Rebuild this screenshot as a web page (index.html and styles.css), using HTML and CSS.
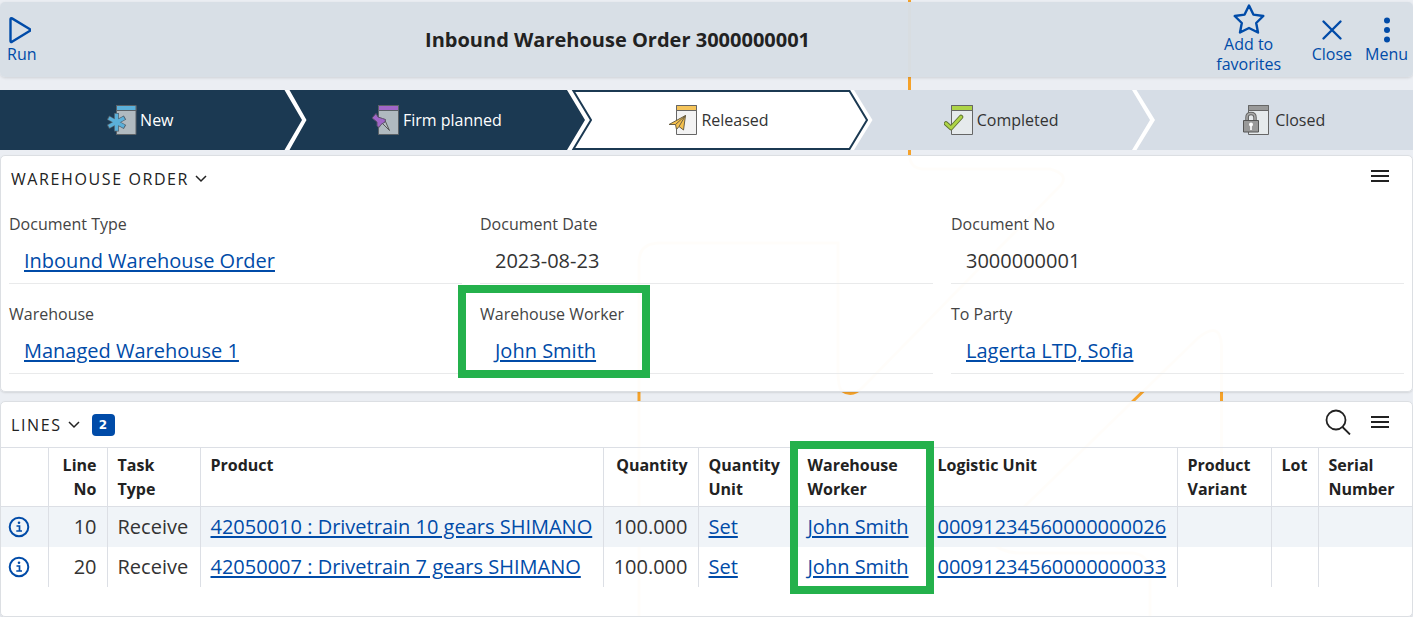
FILE: index.html
```html
<!DOCTYPE html>
<html lang="en">
<head>
<meta charset="utf-8">
<title>Inbound Warehouse Order 3000000001</title>
<link rel="stylesheet" href="styles.css">
</head>
<body>
<svg class="backdrop" width="1413" height="617" fill="none" stroke="#f5a22a" stroke-width="3" aria-hidden="true">
  <path d="M909.500 0V155Q910 169 924 169H1050Q1072 175 1058 188L863 387Q852 398 841 390Q838 386 838 370V243H660Q639 243 639 262V617"/>
  <path d="M1221.500 480V345Q1220 320 1198 338L990 540Q1000 553 1020 553H1130Q1150 553 1150 575V617"/>
</svg>
<div class="page">
  <header class="topbar">
    <button class="action action-start" type="button">
      <svg width="24" height="28" viewBox="0 0 24 28" fill="none" stroke="#004ba8" stroke-width="2.400" stroke-linejoin="round"><path d="M3.500 3.200Q3.500 1.600 5 2.400L23 13.200Q24.300 14 23 14.800L5 25.800Q3.500 26.500 3.500 25Z"/></svg>
      <span>Run</span>
    </button>
    <h1 class="title">Inbound Warehouse Order 3000000001</h1>
    <div class="actions">
      <button class="action action-wide" type="button">
        <svg width="32" height="30" viewBox="0 0 32 30" fill="none" stroke="#004ba8" stroke-width="2.400" stroke-linejoin="round"><path d="M16 1.500L20.400 10.600L30.300 12L23.200 19L25 28.500L16 24L7 28.500L8.800 19L1.700 12L11.600 10.600Z"/></svg>
        <span>Add to favorites</span>
      </button>
      <button class="action" type="button">
        <svg width="24" height="28" viewBox="0 0 24 28" fill="none" stroke="#004ba8" stroke-width="2.400" stroke-linecap="round"><path d="M3.500 5.500L20.500 22.500M20.500 5.500L3.500 22.500"/></svg>
        <span>Close</span>
      </button>
      <button class="action" type="button">
        <svg width="24" height="28" viewBox="0 0 24 28" fill="#004ba8"><circle cx="12" cy="4.500" r="3"/><circle cx="12" cy="14" r="3"/><circle cx="12" cy="23.500" r="3"/></svg>
        <span>Menu</span>
      </button>
    </div>
  </header>

  <nav class="steps" aria-label="Document state">
    <button class="step step-done" type="button">
      <svg width="30" height="32" viewBox="0 0 30 32"><path d="M9.500 1.500H29V30.500H9.500Z" fill="#b0bac0" stroke="#5b6166"/><path d="M9.500 1.500H29V6.500H9.500Z" fill="#5bb0da" stroke="#5b6166"/><path d="M9.500 9V27.500M1 13.500L18 23M18 13.500L1 23" stroke="#50606c" stroke-width="4.800"/><path d="M9.500 9.800V26.700M1.800 14L17.200 22.500M17.200 14L1.800 22.500" stroke="#5bb0da" stroke-width="3.400"/></svg>
      New
      <svg class="chevron" width="30" height="60" viewBox="0 0 30 60"><path d="M0 0H4L22 30L4 60H0Z" fill="#1b3952"/><path d="M1.500 0H6.500L23.500 30L6.500 60H1.500L19 30Z" fill="#fff"/></svg>
    </button>
    <button class="step step-done" type="button">
      <svg width="30" height="32" viewBox="0 0 30 32"><path d="M8.500 1.500H28.500V30.500H8.500Z" fill="#b0bac0" stroke="#5b6166"/><path d="M8.500 1.500H28.500V6.500H8.500Z" fill="#a066c8" stroke="#5b6166"/><path d="M12 19L19.500 26.500L15 16.500Z" fill="#b8c0c5" stroke="#555"/><path d="M2 14L6 9.500L8 13L12.500 14.500L15.500 15.500L15 18L11 20.500L9 23.500L7 22L7 18Z" fill="#a066c8" stroke="#5a5068"/></svg>
      Firm planned
      <svg class="chevron" width="30" height="60" viewBox="0 0 30 60"><path d="M0 0H4L22 30L4 60H0Z" fill="#1b3952"/><path d="M2 0H30V60H2L20 30Z" fill="#fff"/><path d="M30 1H8.500L26 30L8.500 59H30" fill="none" stroke="#1b3952" stroke-width="2"/></svg>
    </button>
    <button class="step step-current" type="button" aria-current="step">
      <svg width="30" height="32" viewBox="0 0 30 32"><path d="M8.500 1.500H28.500V30.500H8.500Z" fill="#f3f3f3" stroke="#666"/><path d="M8.500 1.500H28.500V6.500H8.500Z" fill="#f5c45a" stroke="#666"/><path d="M1 20.500L17.500 11.500L15.500 26L11 22.500L8.500 25.500L7.500 20.500Z" fill="#f5c04c" stroke="#6b6045"/><path d="M7.500 20.500L17.500 11.500L11 22.500" fill="none" stroke="#6b6045"/></svg>
      Released
      <svg class="chevron" width="30" height="60" viewBox="0 0 30 60"><path d="M0 0H6L24.500 30L6 60H0Z" fill="#fff"/><path d="M0 1H1.500L19 30L1.500 59H0" fill="#fff" stroke="#1b3952" stroke-width="2"/></svg>
    </button>
    <button class="step" type="button">
      <svg width="30" height="32" viewBox="0 0 30 32"><path d="M7.500 1.500H28.500V30.500H7.500Z" fill="#e6eaec" stroke="#666"/><path d="M7.500 1.500H28.500V6.500H7.500Z" fill="#aed447" stroke="#666"/><path d="M2 19.500L7 24L17 13" fill="none" stroke="#5e7131" stroke-width="4.500" stroke-linecap="round" stroke-linejoin="round"/><path d="M2 19.500L7 24L17 13" fill="none" stroke="#aed447" stroke-width="2.800" stroke-linecap="round" stroke-linejoin="round"/></svg>
      Completed
      <svg class="chevron" width="30" height="60" viewBox="0 0 30 60"><path d="M0 0H4L22 30L4 60H0Z" fill="#d6dde6"/><path d="M2 0H6.500L25 30L6.500 60H2L20 30Z" fill="#fff"/></svg>
    </button>
    <button class="step" type="button">
      <svg width="30" height="32" viewBox="0 0 30 32"><path d="M6.500 1.500H26.500V30.500H6.500Z" fill="#e6eaec" stroke="#666"/><path d="M6.500 1.500H26.500V6.500H6.500Z" fill="#999" stroke="#666"/><path d="M5 17V13.500Q5 9.500 9 9.500T13 13.500V17" fill="none" stroke="#666" stroke-width="3.500"/><path d="M5 17V13.500Q5 9.500 9 9.500T13 13.500V17" fill="none" stroke="#aaa" stroke-width="1.500"/><path d="M1.500 16.500H16.500V28H1.500Z" fill="#999" stroke="#555"/><circle cx="9" cy="20.500" r="2" fill="#fff"/><path d="M8.200 21H9.800V26H8.200Z" fill="#fff"/></svg>
      Closed
    </button>
  </nav>

  <main>
    <section class="card card-order">
      <div class="card-head">
        <h2><button class="toggle" type="button">WAREHOUSE ORDER
          <svg width="12" height="8" viewBox="0 0 12 8" fill="none" stroke="#222" stroke-width="1.500"><path d="M1 1L6 6L11 1"/></svg></button></h2>
        <button class="icon-button" type="button" aria-label="Panel menu"><svg width="18" height="14" viewBox="0 0 18 14" stroke="#222" stroke-width="2"><path d="M0 2H18M0 7H18M0 12H18"/></svg></button>
      </div>
      <dl class="fields">
        <div class="field"><dt>Document Type</dt><dd><a href="#">Inbound Warehouse Order</a></dd></div>
        <div class="field"><dt>Document Date</dt><dd>2023-08-23</dd></div>
        <div class="field"><dt>Document No</dt><dd>3000000001</dd></div>
        <div class="field"><dt>Warehouse</dt><dd><a href="#">Managed Warehouse 1</a></dd></div>
        <div class="field marked"><dt>Warehouse Worker</dt><dd><a href="#">John Smith</a></dd></div>
        <div class="field"><dt>To Party</dt><dd><a href="#">Lagerta LTD, Sofia</a></dd></div>
      </dl>
    </section>

    <section class="card card-lines">
      <div class="card-head">
        <h2><button class="toggle" type="button">LINES
          <svg width="12" height="8" viewBox="0 0 12 8" fill="none" stroke="#222" stroke-width="1.500"><path d="M1 1L6 6L11 1"/></svg></button></h2>
        <span class="badge">2</span>
        <div class="tools">
          <button class="icon-button" type="button" aria-label="Search"><svg width="26" height="26" viewBox="0 0 26 26" fill="none" stroke="#222" stroke-width="1.800"><circle cx="11" cy="11" r="9.500"/><path d="M17.500 18L25 25.500"/></svg></button>
          <button class="icon-button" type="button" aria-label="Panel menu"><svg width="18" height="14" viewBox="0 0 18 14" stroke="#222" stroke-width="2"><path d="M0 2H18M0 7H18M0 12H18"/></svg></button>
        </div>
      </div>
      <table class="lines">
        <colgroup><col class="c-info"><col class="c-no"><col class="c-task"><col class="c-product"><col class="c-qty"><col class="c-unit"><col class="c-worker"><col class="c-logistic"><col class="c-variant"><col class="c-lot"><col></colgroup>
        <thead>
          <tr><th></th><th class="num">Line No</th><th>Task Type</th><th>Product</th><th class="num">Quantity</th><th>Quantity Unit</th><th>Warehouse Worker</th><th>Logistic Unit</th><th>Product Variant</th><th>Lot</th><th>Serial Number</th></tr>
        </thead>
        <tbody>
          <tr>
            <td><button class="info" type="button" aria-label="Details"><svg width="22" height="22" viewBox="0 0 22 22" fill="none" stroke="#004ba8" stroke-width="2"><circle cx="11" cy="11" r="9.300"/><path d="M8.500 10H11.500V15M8.300 15H14" stroke-width="1.700"/><circle cx="11" cy="6.800" r="1.300" fill="#004ba8" stroke="none"/></svg></button></td>
            <td class="num">10</td><td>Receive</td><td><a href="#">42050010 : Drivetrain 10 gears SHIMANO</a></td><td class="num">100.000</td><td><a href="#">Set</a></td><td><a href="#">John Smith</a></td><td><a href="#">00091234560000000026</a></td><td></td><td></td><td></td>
          </tr>
          <tr>
            <td><button class="info" type="button" aria-label="Details"><svg width="22" height="22" viewBox="0 0 22 22" fill="none" stroke="#004ba8" stroke-width="2"><circle cx="11" cy="11" r="9.300"/><path d="M8.500 10H11.500V15M8.300 15H14" stroke-width="1.700"/><circle cx="11" cy="6.800" r="1.300" fill="#004ba8" stroke="none"/></svg></button></td>
            <td class="num">20</td><td>Receive</td><td><a href="#">42050007 : Drivetrain 7 gears SHIMANO</a></td><td class="num">100.000</td><td><a href="#">Set</a></td><td><a href="#">John Smith</a></td><td><a href="#">00091234560000000033</a></td><td></td><td></td><td></td>
          </tr>
        </tbody>
      </table>
      <div class="column-mark" aria-hidden="true"></div>
    </section>
  </main>
</div>
</body>
</html>
```
FILE: styles.css
```css
*, *::before { box-sizing: border-box; }
body {
  margin: 0;
  background: #ebeef3;
  color: #333;
  font: 16px/20px "Open Sans", "Noto Sans", sans-serif;
}
button {
  margin: 0;
  padding: 0;
  border: 0;
  background: none;
  color: inherit;
  font: inherit;
  cursor: pointer;
}
svg { display: block; flex: none; }
a { color: #004ba8; text-underline-offset: 2px; text-decoration-thickness: 2px; }
.backdrop { position: absolute; top: 0; left: 0; z-index: -1; }
.page { padding-top: 2px; }

.topbar {
  display: flex;
  align-items: center;
  min-height: 75px;
  padding: 0 5px 0 7px;
  border-radius: 5px;
  background: rgba(215, 222, 229, 0.98);
  box-shadow: 0 1px 3px rgba(0, 0, 0, 0.12);
}
.title {
  flex: 1;
  margin: 0;
  text-align: center;
  font-size: 20px;
  font-weight: 700;
  line-height: 28px;
  color: #222;
}
.actions { display: flex; align-items: center; gap: 13px; }
.action {
  display: flex;
  flex-direction: column;
  align-items: center;
  color: #004ba8;
}
.action-start { align-items: flex-start; }
.action-wide { width: 100px; padding: 0 16px 2px; }

.steps {
  display: grid;
  grid-template-columns: repeat(5, 1fr);
  margin-top: 13px;
}
.step {
  position: relative;
  display: flex;
  align-items: center;
  justify-content: center;
  gap: 3px;
  height: 60px;
  padding-left: 24px;
  background: #d6dde6;
}
.step:first-child { padding: 0 2px 0 0; }
.step-done { background: #1b3952; color: #fff; font-weight: 500; }
.step-current {
  background: #fff;
  border: solid #1b3952;
  border-width: 2px 0;
}
.chevron { position: absolute; top: 0; left: 100%; z-index: 1; }
.step-current .chevron { top: -2px; }

.card {
  position: relative;
  border: 1px solid #dcdfe3;
  border-radius: 5px;
  background: rgba(255, 255, 255, 0.98);
  box-shadow: 0 1px 2px rgba(0, 0, 0, 0.1);
}
.card-order { margin-top: 5px; padding-bottom: 17px; }
.card-lines { margin-top: 9px; padding-bottom: 29px; }
.card-head {
  display: flex;
  align-items: center;
  height: 45px;
  padding: 0 23px 0 10px;
}
.card-head h2 { margin: 0; font-size: 16px; font-weight: 400; color: #222; }
.toggle { display: flex; align-items: center; gap: 6px; letter-spacing: 0.1em; }
.icon-button { margin-left: auto; padding-bottom: 6px; }
.tools { display: flex; align-items: center; gap: 20px; margin-left: auto; }
.badge {
  min-width: 23px;
  margin-left: 12px;
  border-radius: 4px;
  background: #004ba8;
  color: #fff;
  text-align: center;
  font-family: "DejaVu Sans", sans-serif;
  font-size: 12px;
  font-weight: 700;
  line-height: 22px;
}

.fields {
  display: grid;
  grid-template-columns: repeat(3, 1fr);
  gap: 7px 18px;
  margin: 0;
  padding: 0 8px;
}
.field { position: relative; height: 83px; padding-top: 13px; border-bottom: 1px solid #e9eaeb; }
.field dt { color: #444; line-height: 20px; }
.field dd { margin: 0; padding: 13px 0 0 15px; font-size: 20px; line-height: 28px; }
.marked::before {
  content: "";
  position: absolute;
  top: -6px;
  left: -22px;
  width: 192px;
  height: 93px;
  border: 8px solid #24b14c;
}

.lines {
  width: 100%;
  table-layout: fixed;
  border-collapse: collapse;
}
.lines th {
  padding: 5px 9px 5px 10px;
  border: solid #dcdfe5;
  border-width: 1px 1px 1px 0;
  text-align: left;
  vertical-align: top;
  font-weight: 700;
  line-height: 24px;
  color: #222;
}
.lines td {
  height: 40px;
  padding: 0 9px 0 10px;
  border-right: 1px solid #dcdfe5;
  font-size: 20px;
  line-height: 28px;
  white-space: nowrap;
}
.lines th:last-child, .lines td:last-child { border-right: 0; }
.lines .num { padding-left: 0; padding-right: 10px; text-align: right; }
.lines td:first-child { padding-left: 7px; }
.lines tbody tr:nth-child(odd) { background: #f0f4f8; }
.info { display: block; }
.c-info { width: 47px; }
.c-no { width: 59px; }
.c-task { width: 93px; }
.c-product { width: 403px; }
.c-qty { width: 95px; }
.c-unit { width: 99px; }
.c-worker { width: 130px; }
.c-logistic { width: 250px; }
.c-variant { width: 94px; }
.c-lot { width: 47px; }
.column-mark {
  position: absolute;
  top: 39px;
  left: 789px;
  width: 144px;
  height: 153px;
  border: 8px solid #24b14c;
}
```
